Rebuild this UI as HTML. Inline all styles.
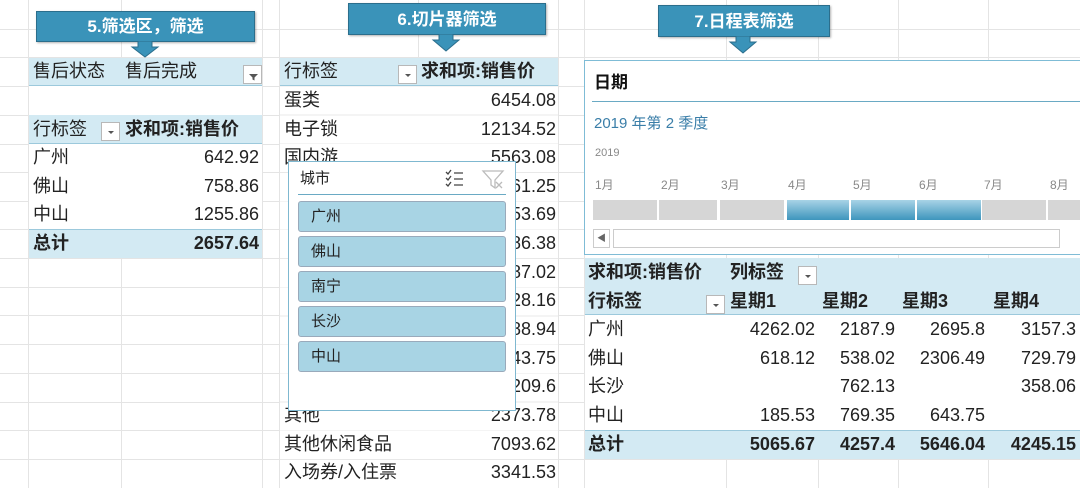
<!DOCTYPE html><html><head><meta charset="utf-8"><style>
*{margin:0;padding:0;box-sizing:border-box}
body{width:1080px;height:488px;overflow:hidden;background:#fff;position:relative;font-family:"Liberation Sans","Noto Sans CJK SC",sans-serif;color:#222}
.a{position:absolute}
.h{position:absolute;left:0;width:1080px;height:1px;background:#e4e4e4}
.v{position:absolute;top:0;height:488px;width:1px;background:#e4e4e4}
.t{position:absolute;font-size:18px;line-height:29px;white-space:nowrap}
.r{text-align:right}
.b{font-weight:bold}
.w{position:absolute;background:#fff}
.bg{position:absolute;background:#d3eaf3}
.dd{position:absolute;width:19px;height:19px;border:1px solid #b8b8b8;background:#fff}
.dd:after{content:"";position:absolute;left:6px;top:8px;border:3px solid transparent;border-top:3px solid #555}
.call{position:absolute;background:#3a93b9;border:1px solid #2b6e8c;color:#fff;font-weight:bold;font-size:17px;text-align:center;box-shadow:1px 1px 2px rgba(0,0,0,.3)}
.btn{position:absolute;left:298px;width:208px;height:31px;background:#a8d4e4;border:1px solid #9ab;border-radius:3px;font-size:15px;line-height:30px;padding-left:12px}
.ml{position:absolute;top:176px;font-size:12px;color:#888}
.seg{position:absolute;top:200px;height:20px;background:#d6d6d6}
.bl{background:linear-gradient(#a8d3e6,#3e95bd)}
</style></head><body>
<div class="h" style="top:29px"></div><div class="h" style="top:57px"></div><div class="h" style="top:86px"></div><div class="h" style="top:115px"></div><div class="h" style="top:144px"></div><div class="h" style="top:172px"></div><div class="h" style="top:201px"></div><div class="h" style="top:229px"></div><div class="h" style="top:258px"></div><div class="h" style="top:287px"></div><div class="h" style="top:315px"></div><div class="h" style="top:344px"></div><div class="h" style="top:373px"></div><div class="h" style="top:402px"></div><div class="h" style="top:430px"></div><div class="h" style="top:459px"></div>
<div class="v" style="left:28px"></div><div class="v" style="left:121px"></div><div class="v" style="left:262px"></div><div class="v" style="left:279px"></div><div class="v" style="left:418px"></div><div class="v" style="left:558px"></div><div class="v" style="left:584px"></div><div class="v" style="left:726px"></div><div class="v" style="left:818px"></div><div class="v" style="left:898px"></div><div class="v" style="left:988px"></div>

<!-- white covers -->
<div class="w" style="left:29px;top:58px;width:233px;height:200px"></div>
<div class="w" style="left:280px;top:58px;width:278px;height:430px;background:repeating-linear-gradient(#fff 0,#fff 28px,#e8e8e8 28px,#e8e8e8 28.7px);background-position:0 0"></div>
<div class="w" style="left:585px;top:258px;width:495px;height:201px"></div>

<!-- left table -->
<div class="bg" style="left:29px;top:58px;width:233px;height:28px;border-bottom:1px solid #9cc9dc"></div>
<div class="t" style="left:33px;top:57px">售后状态</div><div class="t" style="left:125px;top:57px">售后完成</div>
<svg class="a" style="left:243px;top:65px" width="19" height="19"><rect x=".5" y=".5" width="18" height="18" fill="#fff" stroke="#b8b8b8"/><path d="M6 9h9l-3.5 3.5v3l-2-1v-2z" fill="#555"/></svg>
<div class="bg" style="left:29px;top:115px;width:233px;height:29px;border-bottom:1px solid #9cc9dc"></div>
<div class="t" style="left:33px;top:115px">行标签</div><div class="dd" style="left:101px;top:122px"></div><div class="t b" style="left:125px;top:115px">求和项:销售价</div>
<div class="t" style="left:33px;top:143px">广州</div><div class="t r" style="left:140px;width:119px;top:143px">642.92</div>
<div class="t" style="left:33px;top:172px">佛山</div><div class="t r" style="left:140px;width:119px;top:172px">758.86</div>
<div class="t" style="left:33px;top:200px">中山</div><div class="t r" style="left:140px;width:119px;top:200px">1255.86</div>
<div class="bg" style="left:29px;top:229px;width:233px;height:29px;border-top:1px solid #9cc9dc"></div>
<div class="t b" style="left:33px;top:229px">总计</div><div class="t r b" style="left:140px;width:119px;top:229px">2657.64</div>

<!-- middle table -->
<div class="bg" style="left:280px;top:58px;width:278px;height:28px;border-bottom:1px solid #9cc9dc"></div>
<div class="t" style="left:284px;top:57px">行标签</div><div class="dd" style="left:398px;top:65px"></div><div class="t b" style="left:421px;top:57px">求和项:销售价</div>
<div class="t" style="left:284px;top:86px">蛋类</div><div class="t r" style="left:420px;width:136px;top:86px">6454.08</div>
<div class="t" style="left:284px;top:115px">电子锁</div><div class="t r" style="left:420px;width:136px;top:115px">12134.52</div>
<div class="t" style="left:284px;top:143px">国内游</div><div class="t r" style="left:420px;width:136px;top:143px">5563.08</div>
<div class="t r" style="left:420px;width:136px;top:172px">3861.25</div>
<div class="t r" style="left:420px;width:136px;top:200px">3953.69</div>
<div class="t r" style="left:420px;width:136px;top:229px">4986.38</div>
<div class="t r" style="left:420px;width:136px;top:258px">2387.02</div>
<div class="t r" style="left:420px;width:136px;top:286px">3128.16</div>
<div class="t r" style="left:420px;width:136px;top:315px">3388.94</div>
<div class="t r" style="left:420px;width:136px;top:344px">5543.75</div>
<div class="t r" style="left:420px;width:136px;top:372px">1209.6</div>
<div class="t" style="left:284px;top:401px">其他</div><div class="t r" style="left:420px;width:136px;top:401px">2373.78</div>
<div class="t" style="left:284px;top:430px">其他休闲食品</div><div class="t r" style="left:420px;width:136px;top:430px">7093.62</div>
<div class="t" style="left:284px;top:458px">入场券/入住票</div><div class="t r" style="left:420px;width:136px;top:458px">3341.53</div>

<!-- slicer -->
<div class="a" style="left:288px;top:161px;width:228px;height:250px;background:#fff;border:1px solid #7fb8d0"></div>
<div class="a" style="left:300px;top:168px;font-size:15px;line-height:22px">城市</div>
<svg class="a" style="left:444px;top:168px" width="64" height="22" viewBox="0 0 64 22"><g stroke="#444" stroke-width="1.3" fill="none"><path d="M2 4l2 2 3-4M2 10l2 2 3-4M2 16l2 2 3-4M10 5h9M10 11h9M10 17h9"/></g><g stroke="#bbb" stroke-width="1.3" fill="none"><path d="M39 3h20l-8 9v8l-4-3v-5z"/><path d="M52 14l6 6M58 14l-6 6"/></g></svg>
<div class="a" style="left:298px;top:194px;width:208px;height:1px;background:#6aaac4"></div>
<div class="btn" style="top:201px">广州</div><div class="btn" style="top:236px">佛山</div><div class="btn" style="top:271px">南宁</div><div class="btn" style="top:306px">长沙</div><div class="btn" style="top:341px">中山</div>

<!-- timeline -->
<div class="a" style="left:584px;top:60px;width:500px;height:195px;background:#fff;border:1px solid #7fbcd6"></div>
<div class="a b" style="left:594px;top:71px;font-size:17px;line-height:24px;color:#111">日期</div>
<div class="a" style="left:592px;top:101px;width:488px;height:1px;background:#6aaac4"></div>
<div class="a" style="left:594px;top:113px;font-size:15px;line-height:22px;color:#3a7ea8">2019 年第 2 季度</div>
<div class="a" style="left:595px;top:147px;font-size:11px;color:#888">2019</div>
<div class="ml" style="left:595px">1月</div><div class="ml" style="left:661px">2月</div><div class="ml" style="left:721px">3月</div><div class="ml" style="left:788px">4月</div><div class="ml" style="left:853px">5月</div><div class="ml" style="left:919px">6月</div><div class="ml" style="left:984px">7月</div><div class="ml" style="left:1050px">8月</div>
<div class="seg" style="left:593px;width:64px"></div><div class="seg" style="left:659px;width:58px"></div><div class="seg" style="left:720px;width:64px"></div>
<div class="seg bl" style="left:787px;width:62px"></div><div class="seg bl" style="left:851px;width:64px"></div><div class="seg bl" style="left:917px;width:64px"></div>
<div class="seg" style="left:982px;width:64px"></div><div class="seg" style="left:1048px;width:40px"></div>
<div class="a" style="left:593px;top:229px;width:17px;height:19px;border:1px solid #ccc;font-size:9px;color:#666;text-align:center;line-height:17px">◀</div>
<div class="a" style="left:613px;top:229px;width:447px;height:19px;border:1px solid #ccc"></div>

<!-- right table -->
<div class="bg" style="left:585px;top:258px;width:495px;height:57px;border-bottom:1px solid #9cc9dc"></div>
<div class="t b" style="left:588px;top:258px">求和项:销售价</div><div class="t b" style="left:730px;top:258px">列标签</div><div class="dd" style="left:798px;top:266px"></div>
<div class="t b" style="left:588px;top:287px">行标签</div><div class="dd" style="left:706px;top:295px"></div>
<div class="t b" style="left:730px;top:287px">星期1</div><div class="t b" style="left:822px;top:287px">星期2</div><div class="t b" style="left:902px;top:287px">星期3</div><div class="t b" style="left:993px;top:287px">星期4</div>
<div class="t" style="left:588px;top:315px">广州</div><div class="t" style="left:588px;top:344px">佛山</div><div class="t" style="left:588px;top:372px">长沙</div><div class="t" style="left:588px;top:401px">中山</div>
<div class="t r" style="left:700px;width:115px;top:315px">4262.02</div><div class="t r" style="left:780px;width:115px;top:315px">2187.9</div><div class="t r" style="left:870px;width:115px;top:315px">2695.8</div><div class="t r" style="left:961px;width:115px;top:315px">3157.3</div>
<div class="t r" style="left:700px;width:115px;top:344px">618.12</div><div class="t r" style="left:780px;width:115px;top:344px">538.02</div><div class="t r" style="left:870px;width:115px;top:344px">2306.49</div><div class="t r" style="left:961px;width:115px;top:344px">729.79</div>
<div class="t r" style="left:780px;width:115px;top:372px">762.13</div><div class="t r" style="left:961px;width:115px;top:372px">358.06</div>
<div class="t r" style="left:700px;width:115px;top:401px">185.53</div><div class="t r" style="left:780px;width:115px;top:401px">769.35</div><div class="t r" style="left:870px;width:115px;top:401px">643.75</div>
<div class="bg" style="left:585px;top:430px;width:495px;height:29px;border-top:1px solid #9cc9dc"></div>
<div class="t b" style="left:588px;top:430px">总计</div>
<div class="t r b" style="left:700px;width:115px;top:430px">5065.67</div><div class="t r b" style="left:780px;width:115px;top:430px">4257.4</div><div class="t r b" style="left:870px;width:115px;top:430px">5646.04</div><div class="t r b" style="left:961px;width:115px;top:430px">4245.15</div>

<!-- callouts -->
<div class="call" style="left:36px;top:11px;width:219px;height:31px;line-height:30px">5.筛选区，筛选</div>
<svg class="a" style="left:130px;top:41px" width="30" height="17"><path d="M8 0h14v6h6L15 16 2 6h6z" fill="#3a93b9" stroke="#2b6e8c"/></svg>
<div class="call" style="left:348px;top:3px;width:198px;height:32px;line-height:31px">6.切片器筛选</div>
<svg class="a" style="left:431px;top:34px" width="30" height="18"><path d="M8 0h14v6h6L15 17 2 6h6z" fill="#3a93b9" stroke="#2b6e8c"/></svg>
<div class="call" style="left:658px;top:5px;width:172px;height:32px;line-height:31px">7.日程表筛选</div>
<svg class="a" style="left:728px;top:36px" width="30" height="18"><path d="M8 0h14v6h6L15 17 2 6h6z" fill="#3a93b9" stroke="#2b6e8c"/></svg>
</body></html>
